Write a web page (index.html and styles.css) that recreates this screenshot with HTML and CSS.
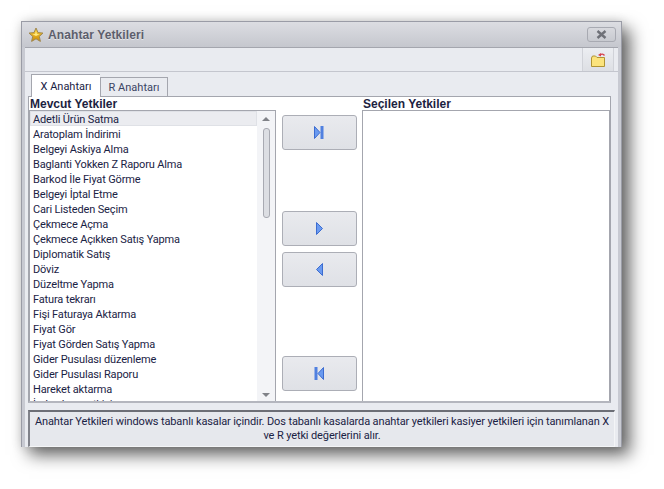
FILE: index.html
```html
<!DOCTYPE html>
<html>
<head>
	<meta charset="utf-8">
	<title>Anahtar Yetkileri</title>
	<link rel="stylesheet" href="styles.css">
</head>
<body>
<div class="window">
	<div class="titlebar">
		<svg class="star" width="16" height="16" viewBox="0 0 16 16">
			<defs>
				<linearGradient id="gold" x1="0" y1="0" x2="0" y2="1">
					<stop offset="0" stop-color="#ffd840"/>
					<stop offset="1" stop-color="#c88808"/>
				</linearGradient>
			</defs>
			<path d="M8 1 L10 5.6 L15 6.1 L11.3 9.4 L12.4 14.4 L8 11.8 L3.6 14.4 L4.7 9.4 L1 6.1 L6 5.6 Z" fill="url(#gold)" stroke="#a08850" stroke-width="1"/>
			<path d="M8 4 L9 7 L11.5 7.3 L8 9 L4.5 7.3 L7 7 Z" fill="#ffe880"/>
		</svg>
		<span class="title">Anahtar Yetkileri</span>
		<div class="close">
			<svg width="11" height="9" viewBox="0 0 11 9"><path d="M1.5 1 L9.5 8 M9.5 1 L1.5 8" stroke="#6f7178" stroke-width="2.4"/></svg>
		</div>
	</div>
	<div class="inner">
		<div class="toolbar">
			<div class="toolbtn">
				<svg width="16" height="16" viewBox="0 0 16 16">
					<path d="M1.5 6 L1.5 14.5 L14.5 14.5 L14.5 5.5 L7 5.5 L5.5 4 L2.5 4 Z" fill="#fbe37c" stroke="#b09434"/>
					<path d="M10 3 Q12.5 1 14.5 3.5" fill="none" stroke="#d8404c" stroke-width="1.4"/>
					<path d="M8 3 L11 1 L11 4.5 Z" fill="#d8404c"/>
				</svg>
			</div>
		</div>
		<div class="tabs">
			<div class="tab active">X Anahtarı</div>
			<div class="tab">R Anahtarı</div>
		</div>
		<div class="page">
			<div class="col">
				<div class="label">Mevcut Yetkiler</div>
				<div class="listbox">
					<div class="items">
						<div class="item selected">Adetli Ürün Satma</div>
						<div class="item">Aratoplam İndirimi</div>
						<div class="item">Belgeyi Askiya Alma</div>
						<div class="item">Baglanti Yokken Z Raporu Alma</div>
						<div class="item">Barkod İle Fiyat Görme</div>
						<div class="item">Belgeyi İptal Etme</div>
						<div class="item">Cari Listeden Seçim</div>
						<div class="item">Çekmece Açma</div>
						<div class="item">Çekmece Açıkken Satış Yapma</div>
						<div class="item">Diplomatik Satış</div>
						<div class="item">Döviz</div>
						<div class="item">Düzeltme Yapma</div>
						<div class="item">Fatura tekrarı</div>
						<div class="item">Fişi Faturaya Aktarma</div>
						<div class="item">Fiyat Gör</div>
						<div class="item">Fiyat Görden Satış Yapma</div>
						<div class="item">Gider Pusulası düzenleme</div>
						<div class="item">Gider Pusulası Raporu</div>
						<div class="item">Hareket aktarma</div>
						<div class="item">İade alma yetkisi</div>
					</div>
					<div class="scrollbar">
						<div class="arrow up"></div>
						<div class="thumb"></div>
						<div class="arrow down"></div>
					</div>
				</div>
			</div>
			<div class="buttons">
				<div class="btn">
					<svg width="10" height="13" viewBox="0 0 10 13"><path d="M0.5 0.5 L6 6.5 L0.5 12.5 Z" fill="#6a9af0" stroke="#3c6cd0"/><rect x="6.5" y="0" width="3" height="13" fill="#5080e0"/></svg>
				</div>
				<div class="btn gap-big">
					<svg width="7" height="13" viewBox="0 0 7 13"><path d="M0.5 0.5 L6.5 6.5 L0.5 12.5 Z" fill="#6a9af0" stroke="#3c6cd0"/></svg>
				</div>
				<div class="btn gap-small">
					<svg width="7" height="13" viewBox="0 0 7 13"><path d="M6.5 0.5 L0.5 6.5 L6.5 12.5 Z" fill="#6a9af0" stroke="#3c6cd0"/></svg>
				</div>
				<div class="btn gap-last">
					<svg width="10" height="13" viewBox="0 0 10 13"><rect x="0.5" y="0" width="3" height="13" fill="#5080e0"/><path d="M9.5 0.5 L4 6.5 L9.5 12.5 Z" fill="#6a9af0" stroke="#3c6cd0"/></svg>
				</div>
			</div>
			<div class="col right">
				<div class="label">Seçilen Yetkiler</div>
				<div class="listbox"></div>
			</div>
		</div>
		<div class="note">Anahtar Yetkileri windows tabanlı kasalar içindir. Dos tabanlı kasalarda anahtar yetkileri kasiyer yetkileri için tanımlanan X ve R yetki değerlerini alır.</div>
	</div>
</div>
</body>
</html>
```
FILE: styles.css
```css
body {
	margin: 0;
	height: 489px;
	box-sizing: border-box;
	padding: 21px 0 0 21px;
	background: #fff;
	font-family: Roboto, sans-serif;
	font-size: 11px;
	color: #1a2244;
}
.window {
	width: 593px;
	height: 425px;
	border: 1px solid #9a9ca6;
	border-bottom: none;
	background: #c8cad2;
	box-shadow: 8px 8px 16px rgba(0, 0, 0, 0.6), 0 0 10px rgba(0, 0, 0, 0.12);
	padding: 0 3px;
}
.titlebar {
	height: 25px;
	display: flex;
	align-items: center;
	margin: 0 -3px;
	padding: 0 5px 0 6px;
	background: linear-gradient(#dcdde2, #c5c7ce);
}
.title {
	margin-left: 4px;
	font-family: "Liberation Sans", sans-serif;
	font-weight: bold;
	font-size: 12px;
	letter-spacing: 0.1px;
	color: #5c5e6c;
	text-shadow: 0 1px 0 rgba(255, 255, 255, 0.5);
}
.close {
	margin-left: auto;
	width: 27px;
	height: 13px;
	border: 1px solid #a8aab2;
	border-radius: 3px;
	display: flex;
	align-items: center;
	justify-content: center;
	background: linear-gradient(#d8d9de, #c8cad0);
}
.inner {
	height: 399px;
	border-top: 1px solid #a4a6ae;
	background: #e9ebf0;
}
.toolbar {
	height: 23px;
	display: flex;
	justify-content: flex-end;
	border-bottom: 1px solid #c4c6ce;
	padding-right: 4px;
}
.toolbtn {
	width: 30px;
	display: flex;
	align-items: center;
	justify-content: center;
	border-left: 1px solid #d0d2d8;
	border-right: 1px solid #d0d2d8;
	background: linear-gradient(#eceef2, #dddfe4);
}
.tabs {
	display: flex;
	align-items: flex-end;
	height: 24px;
	padding-left: 6px;
}
.tab {
	height: 18px;
	line-height: 20px;
	width: 66px;
	text-align: center;
	border: 1px solid #a4a6ae;
	border-bottom: none;
	color: #3a4464;
}
.tab.active {
	height: 22px;
	line-height: 24px;
	width: 68px;
	border-right: none;
	background: #fff;
	margin-bottom: -1px;
	position: relative;
	color: #1a2244;
}
.page {
	display: flex;
	width: 581px;
	height: 304px;
	margin-left: 3px;
	border: 1px solid #a4a6ae;
	border-bottom: 2px solid #b4b6be;
	background: #fff;
}
.col {
	width: 247px;
	display: flex;
	flex-direction: column;
}
.col.right {
	width: 248px;
}
.label {
	height: 13px;
	line-height: 15px;
	font-family: "Liberation Sans", sans-serif;
	font-weight: bold;
	font-size: 12px;
	color: #1c2240;
	padding-left: 1px;
}
.listbox {
	flex: 1;
	display: flex;
	min-height: 0;
	border: 1px solid #a4a6ae;
	border-bottom: none;
	overflow: hidden;
}
.items {
	flex: 1;
	overflow: hidden;
	letter-spacing: -0.15px;
}
.item {
	height: 15px;
	line-height: 17px;
	padding-left: 3px;
}
.item.selected {
	height: 13px;
	line-height: 15px;
	background: #ebecf0;
	border: 1px solid #dfe1e6;
	padding-left: 2px;
}
.scrollbar {
	width: 18px;
	background: #f3f4f7;
	display: flex;
	flex-direction: column;
	align-items: center;
}
.arrow {
	width: 0;
	height: 0;
	border-left: 4px solid transparent;
	border-right: 4px solid transparent;
}
.arrow.up {
	margin-top: 6px;
	border-bottom: 4px solid #808288;
}
.arrow.down {
	margin-top: auto;
	margin-bottom: 4px;
	border-top: 4px solid #808288;
}
.thumb {
	width: 5px;
	height: 88px;
	margin-top: 7px;
	border: 1px solid #a8aab2;
	border-radius: 3px;
	background: #dcdee3;
}
.buttons {
	width: 86px;
	display: flex;
	flex-direction: column;
	align-items: center;
	padding-top: 18px;
}
.btn {
	width: 73px;
	height: 33px;
	flex: none;
	display: flex;
	align-items: center;
	justify-content: center;
	border: 1px solid #acaeb6;
	border-radius: 3px;
	background: linear-gradient(#e9eaee, #dfe1e6);
}
.gap-big {
	margin-top: 61px;
}
.gap-small {
	margin-top: 6px;
}
.gap-last {
	margin-top: 69px;
}
.note {
	margin: 7px 3px 0 3px;
	height: 31px;
	border: 1px solid #f4f5f7;
	border-top: 2px solid #6c6e76;
	border-left: 2px solid #80828a;
	padding: 3px 3px 0 3px;
	line-height: 14px;
	letter-spacing: -0.12px;
	text-align: center;
	color: #1a2244;
	background: #e6e8ed;
}
```
